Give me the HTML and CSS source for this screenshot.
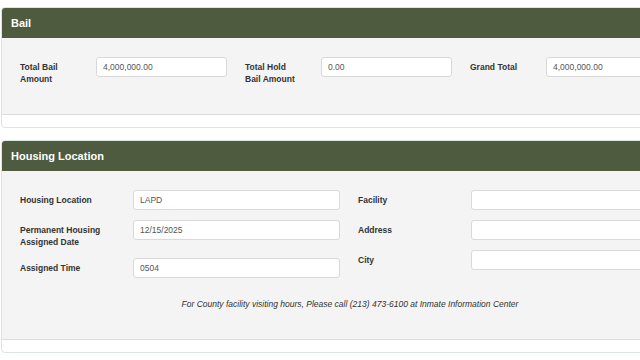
FILE: index.html
```html
<!DOCTYPE html>
<html lang="en">
<head>
  <meta charset="UTF-8" />
  <meta name="viewport" content="width=device-width, initial-scale=1.0"/>
  <title>Booking Details</title>
  <link rel="stylesheet" href="styles.css">
</head>
<body>
  <div class="page">
    <!-- Bail -->
    <section class="panel">
      <div class="panel-heading">Bail</div>
      <div class="panel-body">
        <div class="bail-row">
          <div class="field">
            <label class="field-label bail-label">Total Bail<br>Amount</label>
            <input class="field-input bail-input" type="text" value="4,000,000.00" readonly />
          </div>
          <div class="field">
            <label class="field-label bail-label">Total Hold<br>Bail Amount</label>
            <input class="field-input bail-input" type="text" value="0.00" readonly />
          </div>
          <div class="field">
            <label class="field-label bail-label">Grand Total</label>
            <input class="field-input bail-input" type="text" value="4,000,000.00" readonly />
          </div>
        </div>
      </div>
    </section>

    <!-- Housing Location -->
    <section class="panel">
      <div class="panel-heading">Housing Location</div>
      <div class="panel-body">
        <div class="housing-grid">
          <div class="housing-col">
            <div class="field">
              <label class="field-label housing-label">Housing Location</label>
              <input class="field-input housing-input" type="text" value="LAPD" readonly />
            </div>
            <div class="field">
              <label class="field-label housing-label">Permanent Housing<br>Assigned Date</label>
              <input class="field-input housing-input" type="text" value="12/15/2025" readonly />
            </div>
            <div class="field">
              <label class="field-label housing-label">Assigned Time</label>
              <input class="field-input housing-input" type="text" value="0504" readonly />
            </div>
          </div>
          <div class="housing-col">
            <div class="field">
              <label class="field-label housing-label">Facility</label>
              <input class="field-input housing-input" type="text" value="" readonly />
            </div>
            <div class="field">
              <label class="field-label housing-label">Address</label>
              <input class="field-input housing-input" type="text" value="" readonly />
            </div>
            <div class="field">
              <label class="field-label housing-label">City</label>
              <input class="field-input housing-input" type="text" value="" readonly />
            </div>
          </div>
        </div>
        <p class="note">For County facility visiting hours, Please call (213) 473-6100 at Inmate Information Center</p>
      </div>
    </section>
  </div>
</body>
</html>
```

FILE: styles.css
```css
body {
  font-family: "Liberation Sans", Arial, sans-serif;
  margin: 0;
  background: #fff;
  overflow: hidden;
}

.page {
  width: 698px;
  padding: 7px 0 0 1px;
}

.panel {
  border: 1px solid #d7e8e0;
  border-radius: 4px;
  background: #fff;
  padding-bottom: 12px;
  margin-bottom: 12px;
}

.panel-heading {
  height: 30px;
  line-height: 30px;
  padding-left: 9px;
  background: #4e5b3f;
  color: #fff;
  font-size: 11px;
  font-weight: bold;
  border-radius: 3px 3px 0 0;
}

.panel-body {
  background: #f4f4f4;
  border-bottom: 1px solid #dcdcdc;
  padding: 19px 18px 29px;
}

.bail-row {
  display: flex;
  gap: 18px;
}

.field {
  display: flex;
  align-items: flex-start;
}

.field-label {
  padding-top: 4px;
  font-size: 8.5px;
  line-height: 12px;
  font-weight: bold;
  color: #333;
}

.field-input {
  box-sizing: border-box;
  height: 20px;
  padding: 0 6px;
  border: 1px solid #d9d9d9;
  border-radius: 3px;
  background: #fff;
  font-family: "Liberation Sans", Arial, sans-serif;
  font-size: 8.5px;
  color: #555;
  outline: none;
}

.bail-label {
  width: 76px;
}

.bail-input {
  width: 131px;
}

.housing-grid {
  display: flex;
  gap: 18px;
}

.housing-col {
  display: flex;
  flex-direction: column;
  gap: 10px;
}

.housing-label {
  width: 113px;
}

.housing-input {
  width: 207px;
}

.note {
  margin: 20px 0 0;
  text-align: center;
  font-size: 8.5px;
  line-height: 12px;
  font-style: italic;
  color: #333;
}
```
